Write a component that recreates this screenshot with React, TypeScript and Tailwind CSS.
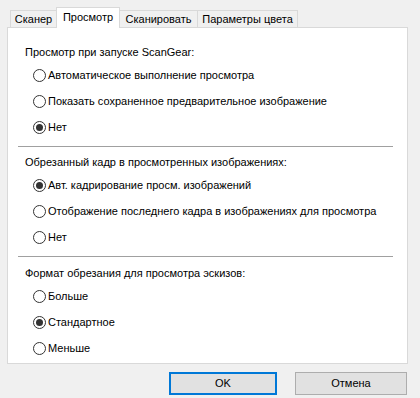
import React from 'react'

const tabs = [
  { label: 'Сканер', w: 'w-[47px]' },
  { label: 'Просмотр', w: 'w-[64px]', active: true },
  { label: 'Сканировать', w: 'w-[79px]' },
  { label: 'Параметры цвета', w: 'w-[101px]' },
]

function Radio({ label, checked }: { label: string; checked?: boolean }) {
  return (
    <div className="h-[26px] flex items-center pl-[8px] whitespace-nowrap">
      <span className="w-[13px] h-[13px] rounded-full border border-[#333333] bg-white flex items-center justify-center shrink-0">
        {checked && <span className="w-[7px] h-[7px] rounded-full bg-[#333333]" />}
      </span>
      <span className="ml-[2px] leading-none">{label}</span>
    </div>
  )
}

function Section({ title, options, checked }: { title: string; options: string[]; checked: number }) {
  return (
    <div>
      <div className="h-[19px] flex items-center leading-none whitespace-nowrap">{title}</div>
      {options.map((o, i) => (
        <Radio key={o} label={o} checked={i === checked} />
      ))}
    </div>
  )
}

export default function App() {
  return (
    <div
      className="w-[420px] h-[398px] bg-[#f0f0f0] text-[11px] text-black overflow-hidden"
      style={{ fontFamily: '"Liberation Sans", Arial, sans-serif' }}
    >
      {/* Tabs */}
      <div className="flex items-end h-[27px] pl-[10px] relative z-10">
        {tabs.map((t) =>
          t.active ? (
            <div
              key={t.label}
              className={`${t.w} h-[21px] -ml-px -mb-px bg-white border border-b-0 border-[#d9d9d9] flex items-center justify-center pb-[2px] whitespace-nowrap`}
            >
              {t.label}
            </div>
          ) : (
            <div
              key={t.label}
              className={`${t.w} h-[17px] -ml-px first:ml-0 bg-[#f0f0f0] border border-b-0 border-[#d9d9d9] flex items-center justify-center pt-[1px] whitespace-nowrap`}
            >
              {t.label}
            </div>
          )
        )}
      </div>

      {/* Panel */}
      <div className="mx-[7px] w-[401px] h-[337px] bg-white border border-[#d9d9d9] pt-[15px] pl-[17px]">
        <Section
          title="Просмотр при запуске ScanGear:"
          options={[
            'Автоматическое выполнение просмотра',
            'Показать сохраненное предварительное изображение',
            'Нет',
          ]}
          checked={2}
        />
        <div className="mt-[6px] w-[375px] -ml-[7px] h-px bg-[#a0a0a0]" />
        <div className="mt-[6px]">
          <Section
            title="Обрезанный кадр в просмотренных изображениях:"
            options={[
              'Авт. кадрирование просм. изображений',
              'Отображение последнего кадра в изображениях для просмотра',
              'Нет',
            ]}
            checked={0}
          />
        </div>
        <div className="mt-[6px] w-[375px] -ml-[7px] h-px bg-[#a0a0a0]" />
        <div className="mt-[7px]">
          <Section
            title="Формат обрезания для просмотра эскизов:"
            options={['Больше', 'Стандартное', 'Меньше']}
            checked={1}
          />
        </div>
      </div>

      {/* Buttons */}
      <div className="flex justify-end pr-[13px] mt-[8px] gap-[18px]">
        <button className="w-[108px] h-[23px] bg-[#e1e1e1] border-2 border-[#0078d7] flex items-center justify-center">
          OK
        </button>
        <button className="w-[112px] h-[23px] bg-[#e1e1e1] border border-[#adadad] flex items-center justify-center">
          Отмена
        </button>
      </div>
    </div>
  )
}
